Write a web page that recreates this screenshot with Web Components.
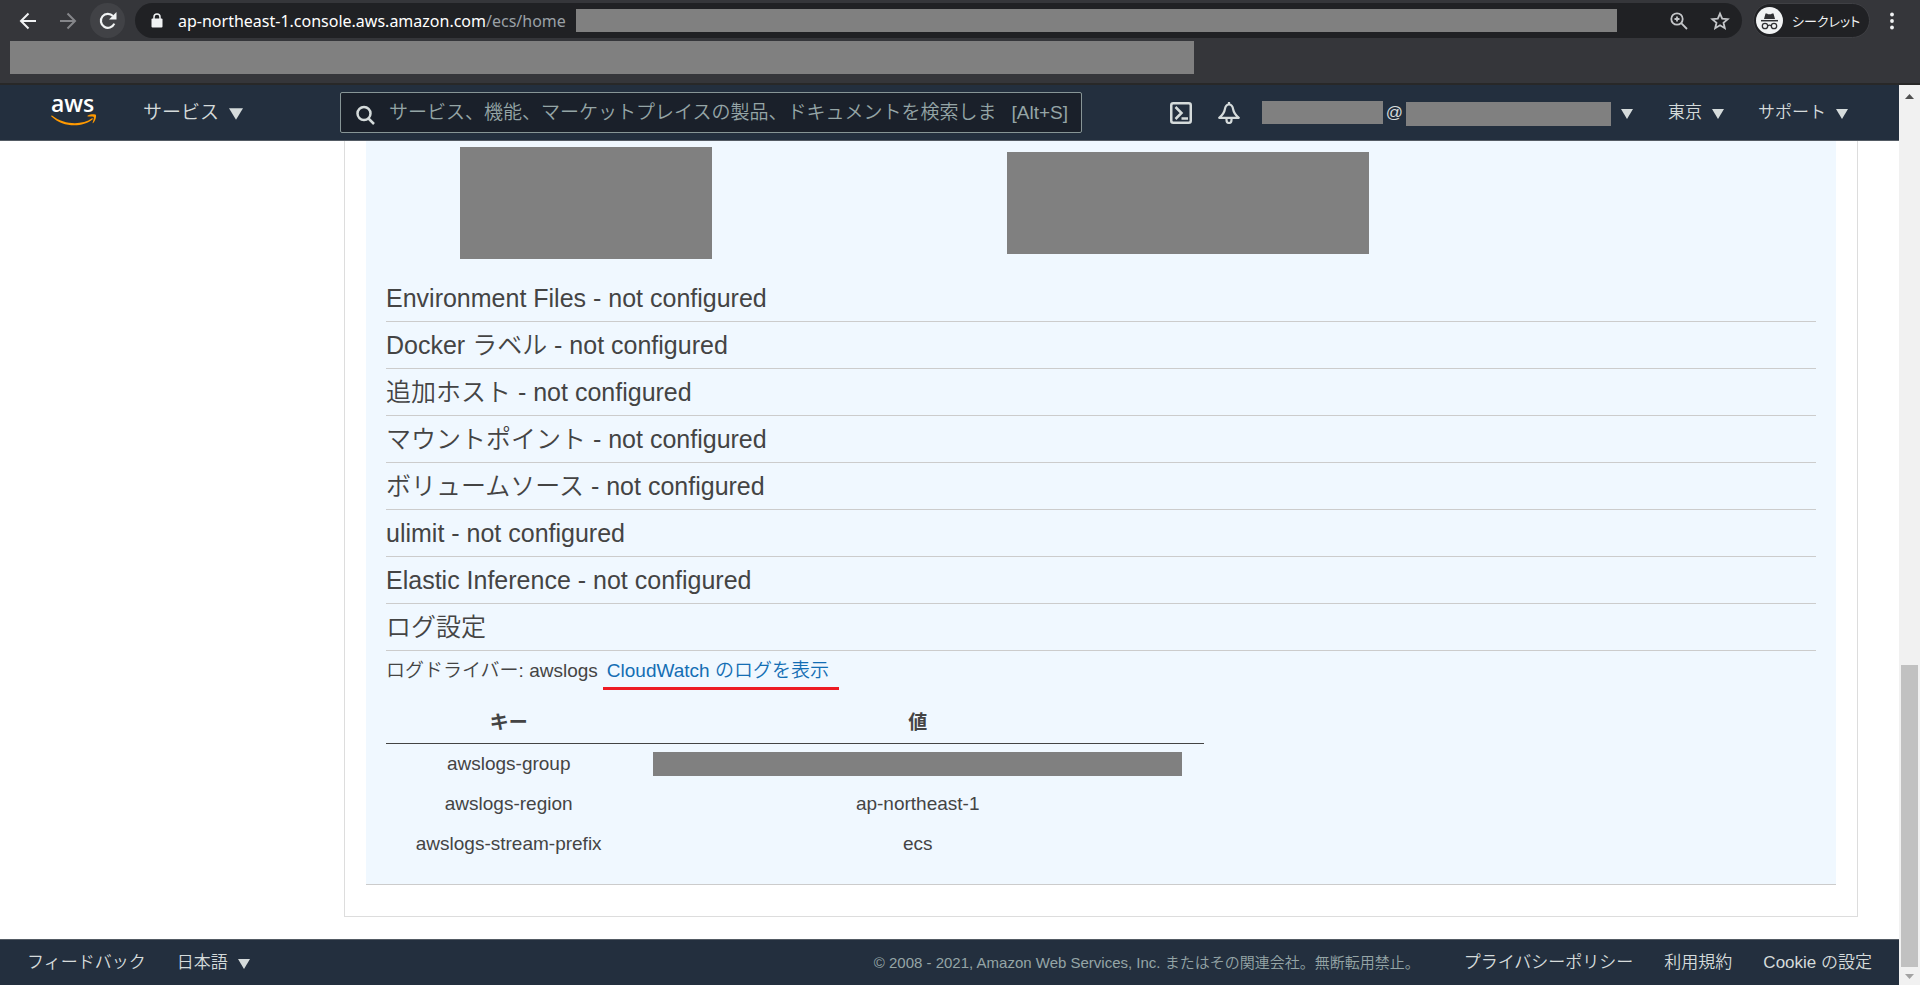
<!DOCTYPE html>
<html lang="ja">
<head>
<meta charset="utf-8">
<title>Amazon ECS</title>
<style>
    :root {
        --ui-font: "Liberation Sans", "Noto Sans CJK JP", sans-serif;
        --navy: #232f3e;
        --nav-text: #d5dbdb;
        --mask: #808080;
        --text: #444;
    }
    body {
        margin: 0;
        height: 100vh;
        display: flex;
        flex-direction: column;
        overflow: hidden;
        font-family: var(--ui-font);
        font-weight: 350;
        color: var(--text);
        background: white;
    }
    .viewport {
        flex: 1;
        min-height: 0;
        display: flex;
    }
    .page {
        flex: 1;
        min-width: 0;
        display: flex;
        flex-direction: column;
    }
    main {
        flex: 1;
        min-height: 0;
        overflow: hidden;
    }
</style>
</head>
<body>
<browser-bar>
    <span slot="host">ap-northeast-1.console.aws.amazon.com</span>
    <span slot="path">/ecs/home</span>
    <span slot="profile">シークレット</span>
</browser-bar>
<div class="viewport">
    <div class="page">
        <console-header></console-header>
        <main>
            <container-panel>
                <config-heading>Environment Files - not configured</config-heading>
                <config-heading>Docker ラベル - not configured</config-heading>
                <config-heading>追加ホスト - not configured</config-heading>
                <config-heading>マウントポイント - not configured</config-heading>
                <config-heading>ボリュームソース - not configured</config-heading>
                <config-heading>ulimit - not configured</config-heading>
                <config-heading>Elastic Inference - not configured</config-heading>
                <config-heading>ログ設定</config-heading>
                <log-driver></log-driver>
                <log-options></log-options>
            </container-panel>
        </main>
        <console-footer></console-footer>
    </div>
    <page-scrollbar></page-scrollbar>
</div>

<script>
function define(name, html) {
    const template = document.createElement('template');
    template.innerHTML = html;
    customElements.define(name, class extends HTMLElement {
        constructor() {
            super();
            this.attachShadow({ mode: 'open' });
            this.shadowRoot.appendChild(template.content.cloneNode(true));
        }
    });
}

// Grey block over private values, sized by its user
define('mask-block', `
    <style>
        :host { display: block; background: var(--mask); }
    </style>
`);

define('browser-bar', `
    <style>
        :host {
            display: block;
            box-sizing: border-box;
            height: 85px;
            padding-top: 3px;
            background: #35363a;
            border-bottom: 2px solid #282828;
            font-family: "Noto Sans", "Noto Sans CJK JP", sans-serif;
            font-weight: 400;
        }
        button {
            display: flex;
            align-items: center;
            justify-content: center;
            width: 35px;
            height: 35px;
            padding: 0;
            border: none;
            border-radius: 50%;
            background: none;
            color: #f1f3f4;
            font: inherit;
        }
        svg { display: block; flex: none; }
        .row {
            display: flex;
            align-items: center;
            height: 35px;
            padding: 0 16px 0 10px;
        }
        .nav { display: flex; gap: 5px; margin-right: 10px; }
        .nav button:nth-child(2) { color: #85868a; }
        .nav button:nth-child(3) { background: #414246; }
        .address {
            flex: 1;
            min-width: 0;
            display: flex;
            align-items: center;
            height: 35px;
            padding: 0 5px 0 16px;
            box-sizing: border-box;
            border-radius: 18px;
            background: #202124;
        }
        .url {
            margin-left: 15px;
            font-size: 16px;
            line-height: 24px;
            white-space: nowrap;
            color: #9aa0a6;
        }
        .host { color: white; }
        .address mask-block { flex: 1; height: 23px; margin: 0 44px 0 10px; }
        .tools { display: flex; gap: 6px; }
        .tools button { color: #c4c6c9; }
        .profile {
            width: 117px;
            justify-content: flex-start;
            gap: 9px;
            margin-left: 11px;
            padding-left: 2px;
            box-sizing: border-box;
            border: 1px solid #3f4044;
            border-radius: 18px;
            background: #202124;
            font-size: 13px;
            font-feature-settings: "palt";
            white-space: nowrap;
        }
        .more { width: 24px; margin-left: 10px; }
        .bookmarks { width: 62%; max-width: 1184px; height: 33px; margin: 3px 10px 0; }
    </style>
    <div class="row">
        <div class="nav">
            <button aria-label="戻る"><svg width="18" height="18" viewBox="0 0 18 18" fill="none" stroke="currentColor" stroke-width="2"><path d="M17 9H2M9.500 1.500L2 9l7.500 7.500"/></svg></button>
            <button aria-label="進む"><svg width="18" height="18" viewBox="0 0 18 18" fill="none" stroke="currentColor" stroke-width="2"><path d="M1 9h15M8.500 1.500L16 9l-7.500 7.500"/></svg></button>
            <button aria-label="再読み込み"><svg width="20" height="20" viewBox="0 0 20 20"><path d="M16.300 12.600A7 7 0 1 1 15 5" fill="none" stroke="currentColor" stroke-width="2.200"/><path d="M18.500 1v7.500H11z" fill="currentColor"/></svg></button>
        </div>
        <div class="address">
            <svg width="12" height="16" viewBox="0 0 12 16"><rect x="0.500" y="5.500" width="11" height="9" rx="1" fill="#f1f3f4"/><path d="M3 6V4a3 3 0 0 1 6 0v2" fill="none" stroke="#f1f3f4" stroke-width="1.500"/></svg>
            <div class="url"><span class="host"><slot name="host"></slot></span><slot name="path"></slot></div>
            <mask-block></mask-block>
            <div class="tools">
                <button aria-label="ズーム"><svg width="18" height="18" viewBox="0 0 18 18" fill="none" stroke="currentColor" stroke-width="1.800"><circle cx="7" cy="7" r="5.700"/><path d="M11.200 11.200L17 17M7 4.500v5M4.500 7h5"/></svg></button>
                <button aria-label="ブックマーク"><svg width="20" height="20" viewBox="0 0 20 20" fill="none" stroke="currentColor" stroke-width="1.800"><path d="M10 2.600l2.200 5.100 5.500.5-4.200 3.600 1.300 5.400-4.800-2.900-4.800 2.900 1.300-5.400-4.200-3.600 5.500-.5z"/></svg></button>
            </div>
        </div>
        <button class="profile">
            <svg width="27" height="27" viewBox="0 0 27 27"><circle cx="13.500" cy="13.500" r="13.500" fill="#f1f3f4"/><path d="M9.500 6.500h1.500l1 .7h3l1-.7h1.500L19 12H8z" fill="#303134"/><path d="M5 13.700h17" stroke="#303134" stroke-width="1.500"/><g fill="none" stroke="#303134" stroke-width="1.300"><circle cx="9" cy="19" r="2.700"/><circle cx="18" cy="19" r="2.700"/><path d="M11.700 18.700q1.800-1 3.600 0"/></g></svg>
            <slot name="profile"></slot>
        </button>
        <button class="more" aria-label="メニュー"><svg width="4" height="18" viewBox="0 0 4 18" fill="currentColor"><circle cx="2" cy="2.500" r="1.900"/><circle cx="2" cy="9" r="1.900"/><circle cx="2" cy="15.500" r="1.900"/></svg></button>
    </div>
    <mask-block class="bookmarks"></mask-block>
`);

// Text button with a small triangle after it
define('nav-menu', `
    <style>
        :host { display: block; color: var(--nav-text); font-size: 17px; }
        button {
            display: flex;
            align-items: center;
            gap: 10px;
            padding: 0;
            border: none;
            background: none;
            color: inherit;
            font: inherit;
            line-height: 24px;
            white-space: nowrap;
        }
        svg { display: block; width: var(--arrow, 12px); height: var(--arrow, 12px); margin-top: 2px; }
    </style>
    <button aria-haspopup="true">
        <slot></slot>
        <svg viewBox="0 0 12 12"><path d="M0 1h12L6 11z" fill="currentColor"/></svg>
    </button>
`);

define('aws-logo', `
    <style>
        :host { display: block; width: 46px; }
        a { display: block; color: white; text-decoration: none; }
        svg { display: block; }
    </style>
    <a href="#" aria-label="AWS">
        <svg width="46" height="52" viewBox="0 -10 46 52">
            <text x="0" y="15" font-family="Open Sans" font-size="23" font-weight="600" fill="white">aws</text>
            <path d="M1 18.500C13 28 31 28.500 41 21.300c.7-.5 1.300.3.700.9C31 31 12 30.500.4 19.400c-.6-.6 0-1.300.6-.9z" fill="#f90"/>
            <path d="M36.500 18.800c2.300-1.600 7.500-1.900 8.300-1 .8 1-.2 6-2.600 8.200-.4.300-.8.100-.6-.3.700-1.700 1.600-4.800 1.200-5.700-.5-.8-4-.6-5.900-.6-.6 0-.8-.3-.4-.6z" fill="#f90"/>
        </svg>
    </a>
`);

define('search-box', `
    <style>
        :host {
            display: flex;
            align-items: center;
            box-sizing: border-box;
            height: 41px;
            padding: 0 13px 0 15px;
            border: 1px solid #879596;
            border-radius: 2px;
            background: #1a202a;
            color: #95a5a6;
            font-size: 19px;
        }
        svg { flex: none; margin-top: 4px; }
        input {
            flex: 1;
            min-width: 0;
            height: 30px;
            margin: 0 18px 0 14px;
            padding: 0;
            border: none;
            outline: none;
            background: none;
            color: inherit;
            font: inherit;
        }
        input::placeholder { color: inherit; opacity: 1; }
    </style>
    <svg width="19" height="20" viewBox="0 0 19 20" fill="none" stroke="#d5dbdb" stroke-width="2.500"><circle cx="8" cy="8.500" r="6.500"/><path d="M12.500 13.500l5.500 5.500"/></svg>
    <input type="text" aria-label="検索" placeholder="サービス、機能、マーケットプレイスの製品、ドキュメントを検索します">
    <span>[Alt+S]</span>
`);

define('console-header', `
    <style>
        :host {
            display: flex;
            align-items: center;
            box-sizing: border-box;
            height: 56px;
            padding: 0 51px;
            background: var(--navy);
            border-bottom: 1px solid #545b64;
            color: var(--nav-text);
            font-size: 17px;
        }
        .services { margin-left: 46px; font-size: 19px; --arrow: 14px; }
        search-box { flex: 0 1 742px; margin-left: 97px; }
        .right { display: flex; align-items: center; margin-left: auto; }
        button { padding: 0; border: none; background: none; color: inherit; }
        svg { display: block; }
        .bell { margin: 0 22px 0 26px; }
        .account { display: flex; align-items: center; margin-right: 35px; }
        .account span { width: 23px; text-align: center; }
        .user { width: 121px; height: 23px; }
        .org { width: 205px; height: 24px; margin: 3px 10px 0 0; }
        .region { margin-right: 34px; }
    </style>
    <aws-logo></aws-logo>
    <nav-menu class="services">サービス</nav-menu>
    <search-box></search-box>
    <div class="right">
        <button aria-label="CloudShell"><svg width="22" height="22" viewBox="0 0 22 22" fill="none" stroke="currentColor" stroke-width="2.500"><rect x="1.250" y="1.250" width="19.500" height="19.500" rx="2"/><path d="M5.500 5l6 6-6 6M11.500 16.500H18"/></svg></button>
        <button class="bell" aria-label="通知"><svg width="22" height="22" viewBox="0 0 22 22" fill="none" stroke="currentColor" stroke-width="2.200" stroke-linejoin="round"><path d="M11 2.500C8.500 2.500 7.300 4.500 6.800 7.500C6.300 11 4.500 13 1.200 15.800h19.600c-3.300-2.800-5.100-4.800-5.600-8.300C14.700 4.500 13.500 2.500 11 2.500z"/><path d="M8.500 16v2a2.500 3 0 0 0 5 0v-2M11 0v2"/></svg></button>
        <div class="account">
            <mask-block class="user"></mask-block>
            <span>@</span>
            <mask-block class="org"></mask-block>
            <nav-menu></nav-menu>
        </div>
        <nav-menu class="region">東京</nav-menu>
        <nav-menu>サポート</nav-menu>
    </div>
`);

define('container-panel', `
    <style>
        :host {
            display: block;
            box-sizing: border-box;
            margin: 0 41px 21px 344px;
            padding: 0 21px 31px;
            border: solid #ddd;
            border-width: 0 1px 1px;
        }
        .detail {
            padding: 6px 20px 20px;
            background: aliceblue;
            border-bottom: 1px solid #ccc;
        }
        .env { display: flex; align-items: center; gap: 295px; padding: 0 74px; margin-bottom: 16px; }
        .key { flex: 0 1 252px; height: 112px; }
        .value { flex: 0 1 362px; height: 102px; }
    </style>
    <section class="detail">
        <div class="env">
            <mask-block class="key"></mask-block>
            <mask-block class="value"></mask-block>
        </div>
        <slot></slot>
    </section>
`);

define('config-heading', `
    <style>
        :host { display: block; border-bottom: 1px solid #ccc; }
        h3 {
            margin: 0;
            padding: 5px 0;
            font-size: 25px;
            font-weight: inherit;
            line-height: 36px;
        }
    </style>
    <h3><slot></slot></h3>
`);

define('log-driver', `
    <style>
        :host { display: block; font-size: 19px; line-height: 24px; padding-top: 8px; }
        p { margin: 0; display: flex; align-items: flex-start; }
        a {
            margin-left: 5px;
            padding: 0 10px 4px 4px;
            border-bottom: 3px solid #ed1c24;
            color: #146eb4;
            text-decoration: none;
        }
    </style>
    <p>ログドライバー: awslogs <a href="#">CloudWatch のログを表示</a></p>
`);

define('log-options', `
    <style>
        :host { display: block; padding-top: 13px; }
        table {
            width: 818px;
            max-width: 100%;
            border-collapse: collapse;
            table-layout: fixed;
            font-size: 19px;
            line-height: 24px;
            text-align: center;
        }
        th, td { padding: 8px 22px; }
        th { font-weight: 700; border-bottom: 1px solid #444; }
        th:first-child { width: 30%; box-sizing: border-box; }
        mask-block { height: 24px; }
    </style>
    <table>
        <thead><tr><th>キー</th><th>値</th></tr></thead>
        <tbody>
            <tr><td>awslogs-group</td><td><mask-block></mask-block></td></tr>
            <tr><td>awslogs-region</td><td>ap-northeast-1</td></tr>
            <tr><td>awslogs-stream-prefix</td><td>ecs</td></tr>
        </tbody>
    </table>
`);

define('console-footer', `
    <style>
        :host {
            display: flex;
            align-items: center;
            box-sizing: border-box;
            height: 46px;
            padding: 0 27px;
            background: var(--navy);
            border-top: 1px solid #545b64;
            color: var(--nav-text);
            font-size: 17px;
            line-height: 24px;
            white-space: nowrap;
        }
        a { color: inherit; text-decoration: none; }
        nav-menu { margin-left: 31px; }
        small { margin: 0 44px 0 auto; font-size: 15px; color: #95a5a6; }
        .links { display: flex; gap: 31px; }
    </style>
    <a href="#">フィードバック</a>
    <nav-menu>日本語</nav-menu>
    <small>© 2008 - 2021, Amazon Web Services, Inc. またはその関連会社。無断転用禁止。</small>
    <div class="links">
        <a href="#">プライバシーポリシー</a>
        <a href="#">利用規約</a>
        <a href="#">Cookie の設定</a>
    </div>
`);

define('page-scrollbar', `
    <style>
        :host {
            display: flex;
            flex-direction: column;
            flex: none;
            width: 21px;
            background: #f1f1f1;
        }
        svg { display: block; margin: 0 auto; }
        .track { flex: 1; display: flex; flex-direction: column; justify-content: flex-end; padding: 0 2px; }
        .thumb { height: 35%; background: #c1c1c1; }
    </style>
    <svg width="21" height="18" viewBox="0 0 21 18"><path d="M6 14l4.500-5 4.500 5z" fill="#505050"/></svg>
    <div class="track"><div class="thumb"></div></div>
    <svg width="21" height="18" viewBox="0 0 21 18"><path d="M6 7h9l-4.500 5z" fill="#a3a3a3"/></svg>
`);
</script>
</body>
</html>
